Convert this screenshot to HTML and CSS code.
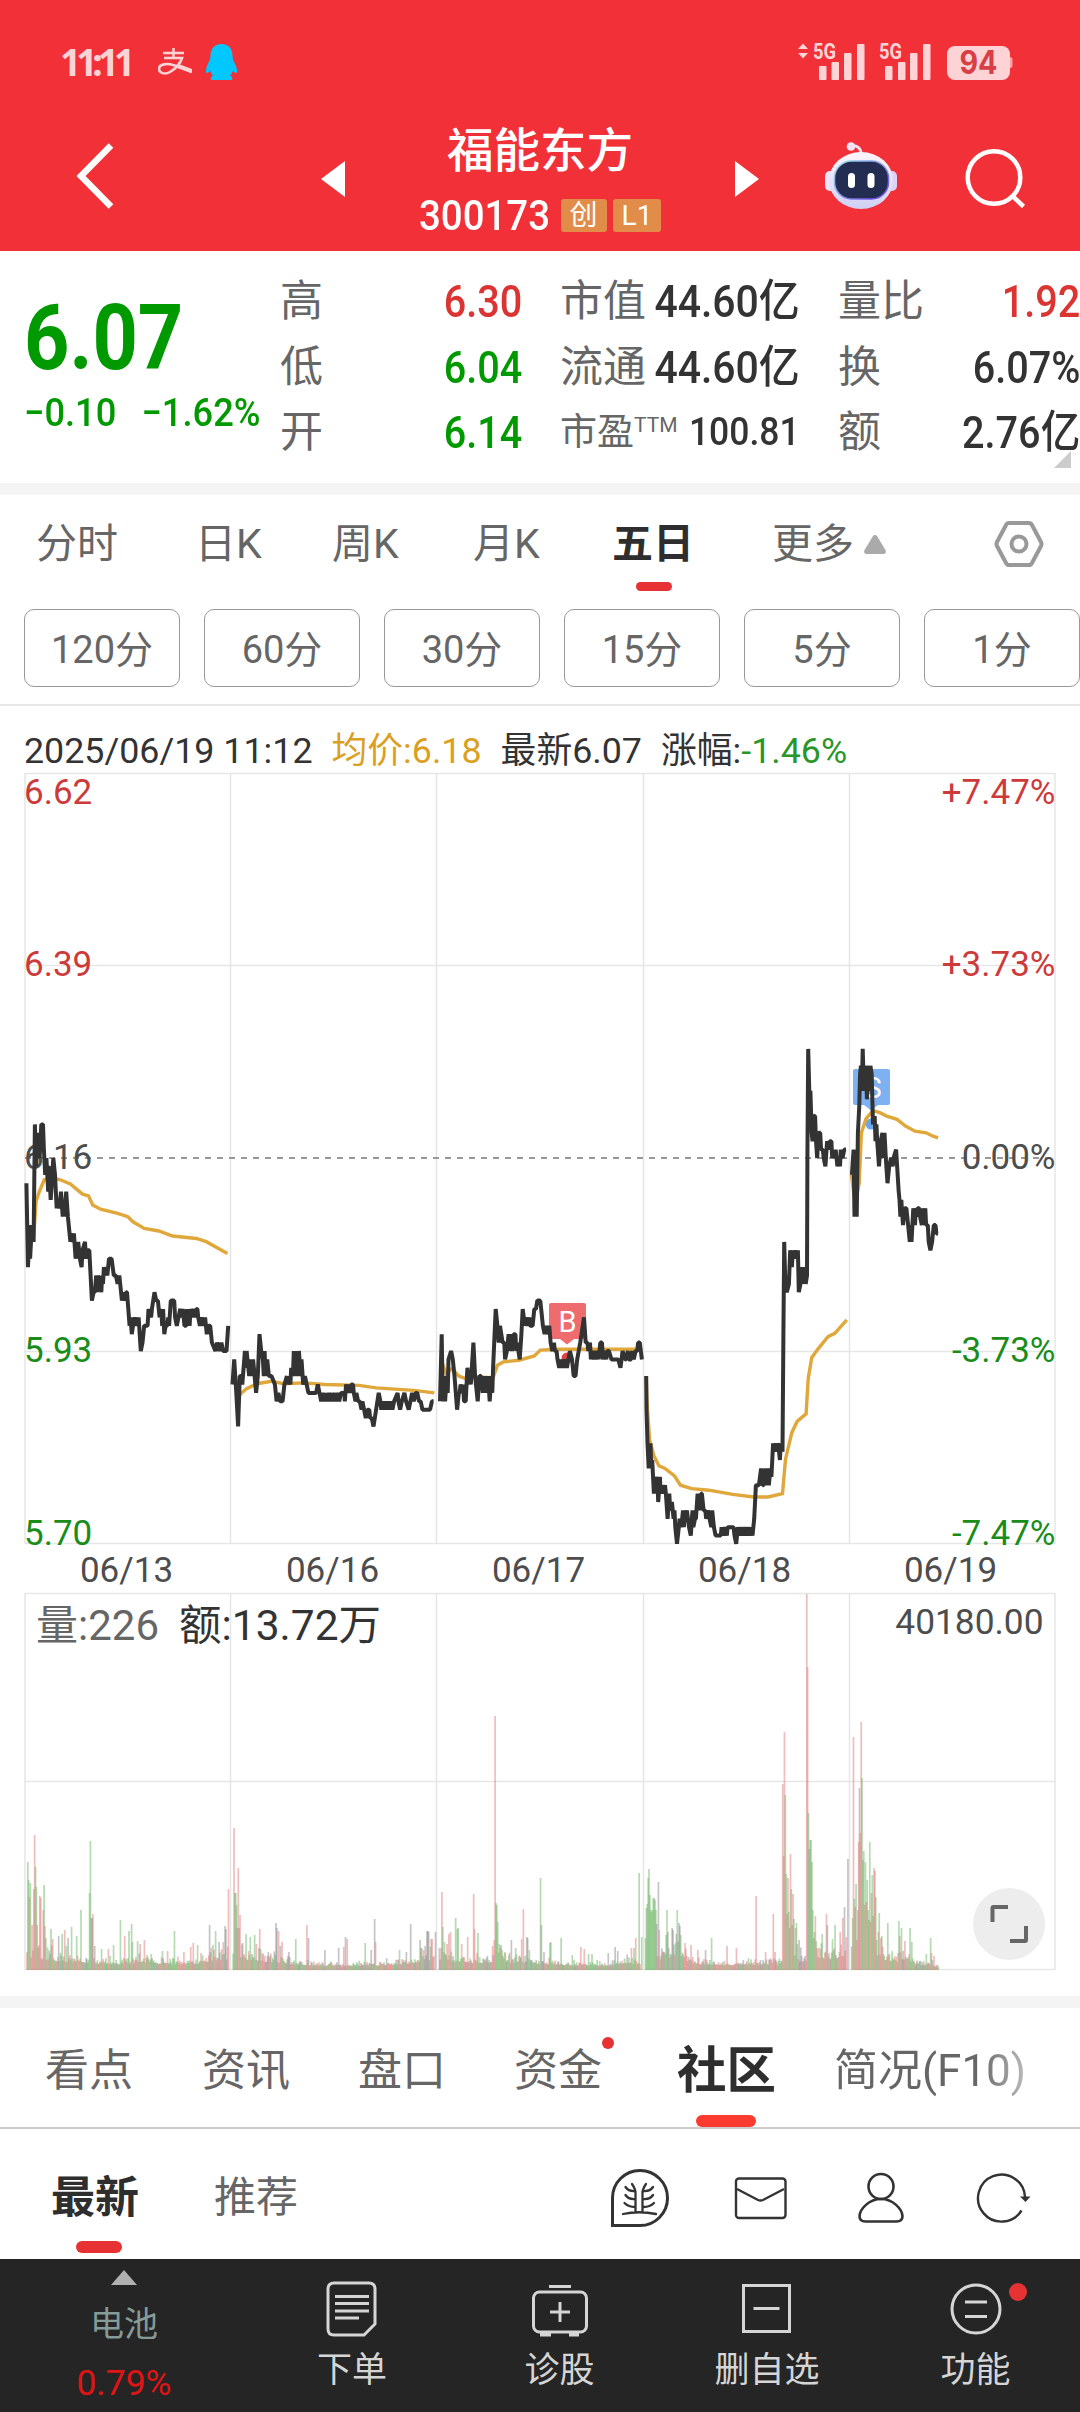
FILE: index.html
```html
<!DOCTYPE html>
<html lang="zh-CN">
<head>
  <meta charset="UTF-8">
  <meta name="viewport" content="width=device-width, initial-scale=1.0">
  <title>福能东方 300173</title>
  <link rel="stylesheet" href="styles.css">
</head>
<body>
  <header class="top">
    <div class="status">
      <span class="time">11:11</span>
      <svg class="alipay" width="34" height="28" viewBox="0 0 34 28" fill="none" stroke="#fdd3d5">
        <path d="M5 5h21M15.500 0v10" stroke-width="2.500"/>
        <path d="M6 10h18c-2 6-7 11-12 14-5 3-11 1-11-3 0-5 8-6 14-4 6 1.500 12 5 19 7" stroke-width="2.600"/>
        <path d="M20 18l14 5" stroke-width="4"/>
      </svg>
      <svg class="qq" width="31" height="36" viewBox="0 0 31 36" fill="#00c8ff">
        <path d="M15.500 0C8 0 4.500 5 4.500 12c0 4-2 6-3.500 10-1.500 4-1.300 7 0 7s2-1 3-2.500c.6 2.300 1.500 3.500 3 5C4 33 4 36 6 36h19c2 0 2-3-1-4.500 1.500-1.500 2.400-2.700 3-5 1 1.500 1.700 2.500 3 2.500s1.500-3 0-7c-1.500-4-3.500-6-3.500-10C26.500 5 23 0 15.500 0z"/>
      </svg>
      <svg class="signals" width="220" height="64" viewBox="796 30 220 64" fill="#fdd3d5">
        <path d="M803 43.500l5 5.500h-10zM803 58.500l5-5.500h-10z"/>
        <text class="net" x="813" y="59" textLength="23" lengthAdjust="spacingAndGlyphs">5G</text>
        <rect x="819" y="66" width="7.500" height="14" rx="1"/>
        <rect x="831.500" y="62" width="7.500" height="18" rx="1"/>
        <rect x="844" y="53" width="7.500" height="27" rx="1"/>
        <rect x="857" y="44" width="7.500" height="36" rx="1"/>
        <text class="net" x="879" y="59" textLength="23" lengthAdjust="spacingAndGlyphs">5G</text>
        <rect x="885" y="66" width="7.500" height="14" rx="1"/>
        <rect x="898" y="62" width="7.500" height="18" rx="1"/>
        <rect x="910" y="53" width="7.500" height="27" rx="1"/>
        <rect x="923" y="44" width="7.500" height="36" rx="1"/>
        <rect x="947" y="46" width="63" height="34" rx="8"/>
        <path d="M1010 57c2 0 2.500 1 2.500 3v5c0 2-.5 3-2.500 3z" opacity=".7"/>
        <text class="battery" x="978.500" y="74" text-anchor="middle" textLength="38" lengthAdjust="spacingAndGlyphs">94</text>
      </svg>
    </div>
    <div class="nav">
      <svg class="back" width="42" height="68" viewBox="0 0 42 68" fill="none" stroke="#fff" stroke-width="6.500">
        <path d="M36 3.500L6 34l30 30.500"/>
      </svg>
      <svg class="arrow" width="24" height="36" viewBox="0 0 24 36" fill="#fff"><path d="M24 0v36L0 18z"/></svg>
      <div class="title">
        <h1>福能东方</h1>
        <div class="code">
          <span class="digits">300173</span><span class="badge">创</span><span class="badge">L1</span>
        </div>
      </div>
      <svg class="arrow" width="24" height="36" viewBox="0 0 24 36" fill="#fff"><path d="M0 0v36l24-18z"/></svg>
      <svg class="robot" width="72" height="67" viewBox="0 0 72 67">
        <defs>
          <linearGradient id="shell" x1="0" y1="0" x2="0" y2="1">
            <stop offset="0" stop-color="#fff5fb"/>
            <stop offset="1" stop-color="#cfd0f4"/>
          </linearGradient>
          <linearGradient id="rim" x1="0" y1="0" x2="1" y2="1">
            <stop offset="0" stop-color="#9be4f0"/>
            <stop offset="1" stop-color="#6a3be0"/>
          </linearGradient>
        </defs>
        <path d="M26 4c6-1 10 2 10 8" fill="none" stroke="#f5dff0" stroke-width="3"/>
        <circle cx="26" cy="4.500" r="4.300" fill="#f4e3f4"/>
        <rect x="0" y="29" width="12" height="20" rx="5" fill="#ece6fa"/>
        <rect x="60" y="29" width="12" height="20" rx="5" fill="#dcd3f6"/>
        <ellipse cx="36" cy="38.500" rx="32" ry="28.500" fill="url(#shell)"/>
        <rect x="9.500" y="19" width="54" height="38" rx="17" fill="#232d52" stroke="url(#rim)" stroke-width="1.500"/>
        <rect x="23" y="31" width="7" height="15" rx="3.500" fill="#fff"/>
        <rect x="42.500" y="31" width="7" height="15" rx="3.500" fill="#fff"/>
      </svg>
      <svg class="search" width="62" height="62" viewBox="0 0 62 62" fill="none" stroke="#fff" stroke-width="4.500">
        <circle cx="29" cy="29.500" r="26.300"/>
        <path d="M47.500 48l11 10.500"/>
      </svg>
    </div>
  </header>

  <section class="quote">
    <div class="price">
      <div class="last">6.07</div>
      <div class="change"><span>−0.10</span><span>−1.62%</span></div>
    </div>
    <dl class="figures">
      <div><dt>高</dt><dd class="up">6.30</dd></div>
      <div><dt>低</dt><dd class="down">6.04</dd></div>
      <div><dt>开</dt><dd class="down">6.14</dd></div>
    </dl>
    <dl class="figures caps">
      <div><dt>市值</dt><dd>44.60亿</dd></div>
      <div><dt>流通</dt><dd>44.60亿</dd></div>
      <div class="pe"><dt>市盈<sup>TTM</sup></dt><dd>100.81</dd></div>
    </dl>
    <dl class="figures">
      <div><dt>量比</dt><dd class="up">1.92</dd></div>
      <div><dt>换</dt><dd>6.07%</dd></div>
      <div><dt>额</dt><dd>2.76亿</dd></div>
    </dl>
    <span class="corner"></span>
  </section>

  <nav class="periods">
    <a>分时</a><a>日K</a><a>周K</a><a>月K</a><a class="active">五日</a>
    <a>更多<svg class="caret" width="24" height="19" viewBox="0 0 24 19" fill="#aaa"><path d="M12 0c1 0 1.500.5 2 1l8.500 14c1 2 0 4-2 4h-17c-2 0-3-2-2-4L10 1c.5-.5 1-1 2-1z"/></svg></a>
    <svg class="gear" width="50" height="48" viewBox="0 0 50 48" fill="none" stroke="#999" stroke-width="4">
      <path d="M15 3h20q2 0 3 2l9 17q1 2 0 4l-9 17q-1 2-3 2H15q-2 0-3-2L3 26q-1-2 0-4l9-17q1-2 3-2z"/>
      <circle cx="25" cy="24" r="7.500"/>
    </svg>
  </nav>

  <div class="minutes">
    <button>120分</button><button>60分</button><button>30分</button><button>15分</button><button>5分</button><button>1分</button>
  </div>

  <section class="chart">
    <div class="legend">
      <span>2025/06/19 11:12</span><span class="avg">均价:6.18</span><span>最新6.07</span><span>涨幅:<b>-1.46%</b></span>
    </div>
    <svg id="priceChart" class="price-chart" width="1080" height="820" viewBox="0 0 1080 820">
      <path class="grid" d="M25 1.500H1055M25 193.500H1055M25 579.500H1055M25 771.500H1055M25 1V772M230.500 1V772M436.500 1V772M643.500 1V772M849.500 1V772M1055 1V772"/>
      <path class="zero" d="M25 386H1055"/>
      <g class="axis">
        <text class="up" x="24" y="32">6.62</text>
        <text class="up" x="24" y="204">6.39</text>
        <text x="24" y="397">6.16</text>
        <text class="down" x="24" y="590">5.93</text>
        <text class="down" x="24" y="773">5.70</text>
      </g>
      <g class="axis end">
        <text class="up" x="1055.500" y="32">+7.47%</text>
        <text class="up" x="1055.500" y="204">+3.73%</text>
        <text x="1055.500" y="397">0.00%</text>
        <text class="down" x="1055.500" y="590">-3.73%</text>
        <text class="down" x="1055.500" y="773">-7.47%</text>
      </g>
      <g class="axis dates">
        <text x="126.500" y="810">06/13</text>
        <text x="332.500" y="810">06/16</text>
        <text x="538.500" y="810">06/17</text>
        <text x="744.500" y="810">06/18</text>
        <text x="950.500" y="810">06/19</text>
      </g>
      <g class="marker">
        <path fill="#ee6c6d" d="M551 531h33q2 0 2 2v32q0 2-2 2h-10l-7 5.500-7-5.500h-9q-2 0-2-2v-32q0-2 2-2z"/>
        <circle fill="#dd4444" cx="567" cy="586" r="5.500"/>
        <text x="567.500" y="560">B</text>
        <path fill="#7db1f1" d="M855 297h33q2 0 2 2v32q0 2-2 2h-10l-7 5.500-7-5.500h-9q-2 0-2-2v-32q0-2 2-2z"/>
        <circle fill="#6ba6ee" cx="871" cy="352" r="5.500"/>
        <text x="873" y="326">S</text>
      </g>
    </svg>
    <div class="volume">
      <svg id="volumeChart" width="1080" height="379" viewBox="0 0 1080 379">
        <path class="grid" d="M25 1.500H1055M25 189.500H1055M25 377.500H1055M25 1V378M230.500 1V378M436.500 1V378M643.500 1V378M849.500 1V378M1055 1V378"/>
        <text class="vol" x="36" y="48">量:226</text>
        <text class="amount" x="179" y="48">额:13.72万</text>
        <text class="max" x="1043.500" y="42">40180.00</text>
      </svg>
      <button class="expand" aria-label="全屏">
        <svg width="40" height="40" viewBox="0 0 40 40" fill="none" stroke="#666" stroke-width="4"><path d="M3.500 18V4q0-1 1-1H19M37 22v14q0 1-1 1H21"/></svg>
      </button>
    </div>
  </section>

  <nav class="sections">
    <a>看点</a><a>资讯</a><a>盘口</a><a class="dot">资金</a><a class="active">社区</a><a class="fade">简况(F10)</a>
  </nav>

  <div class="feed">
    <a class="active">最新</a><a>推荐</a>
    <svg width="60" height="60" viewBox="0 0 60 60" fill="none" stroke="#333" stroke-width="3" stroke-linecap="round">
      <path d="M2.500 57.500V30a27.500 27.500 0 1 1 27.500 27.500z"/>
      <path d="M13 46q16-3.500 33 0M25.500 43V25q0-4-3.500-9M32.500 43V25q0-4 3.500-9M15.500 19q3 4.500 9.500 4M15.500 27q3 4.500 9.500 4M14.500 35q4 4 10.500 4M43 19q-3 4.500-9.500 4M43 27q-3 4.500-9.500 4M44 35q-4 4-10.500 4" stroke-width="2.300"/>
    </svg>
    <svg width="54" height="44" viewBox="0 0 54 44" fill="none" stroke="#333" stroke-width="2.400">
      <rect x="2" y="2.500" width="49.500" height="39.500" rx="3"/><path d="M3 13l21 11q2.500 1 5 0l21-11"/>
    </svg>
    <svg width="48" height="52" viewBox="0 0 48 52" fill="none" stroke="#333" stroke-width="2.600">
      <circle cx="24" cy="14.500" r="12.500"/><path d="M24 27C12 27 3 37 2.500 44q0 5.500 6 5.500h31q6 0 6-5.500C45 37 36 27 24 27z"/>
    </svg>
    <svg width="56" height="52" viewBox="0 0 56 52" fill="none" stroke="#333" stroke-width="2.400">
      <path d="M45.500 38.500A23.500 23.500 0 1 1 49 25"/><path d="M44 24.500h10.500l-5 5.500z" fill="#333" stroke="none"/>
    </svg>
  </div>

  <footer class="bar">
    <a class="sector">
      <svg width="26" height="15" viewBox="0 0 26 15" fill="#b0b0b0"><path d="M13 0l13 15H0z"/></svg>
      <span>电池</span><b>0.79%</b>
    </a>
    <a>
      <svg width="58" height="58" viewBox="0 0 58 58" fill="none" stroke="#d5d5d5" stroke-width="3">
        <path d="M11 3h35q6 0 6 6v35L41 55H11q-6 0-6-6V9q0-6 6-6z"/><path d="M12 16.500h34M12 23.500h34M12 31h34M12 38h24"/>
      </svg>下单
    </a>
    <a>
      <svg width="58" height="58" viewBox="0 0 58 58" fill="none" stroke="#d5d5d5" stroke-width="3">
        <rect x="2.500" y="12" width="53" height="40" rx="6"/><path d="M18 6.500h22M29 22v20M19 32h20"/><path d="M9 54.500h11M38 54.500h10" stroke-width="4"/>
      </svg>诊股
    </a>
    <a>
      <svg width="58" height="58" viewBox="0 0 58 58" fill="none" stroke="#d5d5d5" stroke-width="3">
        <rect x="5.500" y="5.500" width="46" height="46"/><path d="M15.500 28.500h26"/>
      </svg>删自选
    </a>
    <a class="dot">
      <svg width="58" height="58" viewBox="0 0 58 58" fill="none" stroke="#d5d5d5" stroke-width="3">
        <circle cx="29" cy="29" r="24"/><path d="M18 22h22M18 36.500h22"/>
      </svg>功能
    </a>
  </footer>

  <script src="chart.js"></script>
</body>
</html>
```
FILE: styles.css
```css
* {
  box-sizing: border-box;
  margin: 0;
  padding: 0;
}

body {
  width: 1080px;
  height: 2412px;
  overflow: hidden;
  background: #fff;
  color: #333;
  font-family: Roboto, "Noto Sans CJK SC", sans-serif;
}

svg {
  display: block;
  flex: none;
}

button {
  font-family: inherit;
  background: none;
  border: none;
}

/* red header */
.top {
  height: 251px;
  background: #f23038;
  color: #fff;
}

.status {
  display: flex;
  align-items: center;
  height: 124px;
  padding: 0 64px 0 60px;
}

.time {
  width: 98px;
  color: #fdd3d5;
  font: bold 37px/40px "Noto Sans", sans-serif;
  letter-spacing: -5px;
}

.qq {
  margin-left: 14px;
}

.signals {
  margin-left: auto;
}

.net {
  font-size: 22px;
  font-weight: bold;
}

.battery {
  font: bold 32px Inter, sans-serif;
  fill: #d93d45;
}

.nav {
  display: grid;
  grid-template-columns: 321px 24px 390px 24px 66px 72px 68px 1fr;
  height: 127px;
}

.back {
  margin: 18px 0 0 75px;
}

.arrow {
  margin-top: 37px;
}

.title {
  text-align: center;
}

.title h1 {
  font-size: 46.5px;
  font-weight: 500;
  line-height: 54px;
}

.code {
  display: flex;
  justify-content: center;
  align-items: center;
  gap: 6px;
  height: 33px;
  margin-top: 21px;
}

.digits {
  width: 136px;
  font-size: 42px;
  font-weight: 500;
  line-height: 33px;
  text-align: left;
  transform: scaleX(0.915);
  transform-origin: left;
  white-space: nowrap;
}

.badge {
  padding: 0 9px;
  border-radius: 3px;
  background: #e28c4a;
  font-size: 28px;
  line-height: 33px;
}

.robot {
  grid-column: 6;
  margin-top: 18px;
}

.search {
  grid-column: 8;
  margin-top: 24px;
}

/* price summary */
.quote {
  position: relative;
  display: grid;
  grid-template-columns: 280px 242px 278px 280px;
  height: 244px;
  padding-top: 18px;
  border-bottom: 12px solid #f4f4f4;
}

.price {
  padding: 27px 0 0 24px;
  color: #090;
}

.last {
  font-size: 91px;
  font-weight: 700;
  line-height: 84px;
  transform: scaleX(0.87);
  transform-origin: left;
}

.change {
  display: flex;
  gap: 27px;
  margin-top: 13px;
  font-size: 39px;
  font-weight: 500;
  line-height: 40px;
  transform: scaleX(0.93);
  transform-origin: left;
  white-space: nowrap;
}

.figures div {
  display: flex;
  justify-content: space-between;
  height: 65.5px;
  line-height: 65px;
  white-space: nowrap;
}

.figures + .figures {
  padding-left: 38px;
}

.figures dt {
  color: #666;
  font-size: 43px;
}

.figures dd {
  font-size: 45px;
  font-weight: 500;
  transform: scaleX(0.88);
  transform-origin: right;
}

.figures.caps dd {
  margin-left: -20px;
  transform: scaleX(0.91);
}

.figures .pe dt {
  font-size: 37px;
}

.figures .pe dd {
  font-size: 39px;
}

sup {
  font-size: 21px;
  line-height: 0;
  vertical-align: 13px;
}

.up {
  color: #db3533;
  fill: #cc3a3a;
}

.down {
  color: #090;
  fill: #1a8c1a;
}

.corner {
  position: absolute;
  right: 9px;
  top: 200px;
  border-left: 17px solid transparent;
  border-bottom: 17px solid #ccc;
}

/* period tabs */
.periods {
  display: grid;
  grid-template-columns: 159px 137px 141px 139px 160px 221px 50px;
  align-items: center;
  height: 98px;
  padding-left: 36px;
  color: #666;
  font-size: 41px;
}

.periods a {
  display: flex;
  align-items: center;
  line-height: 100px;
  height: 98px;
}

.periods .active {
  position: relative;
  color: #2e2e2e;
  font-weight: 700;
}

.periods .active::after {
  content: "";
  position: absolute;
  left: 24px;
  bottom: 2px;
  width: 36px;
  height: 9px;
  border-radius: 5px;
  background: #e63232;
}

.caret {
  margin-left: 9px;
}

.gear {
  margin-left: 1px;
}

.minutes {
  display: flex;
  gap: 24px;
  height: 113px;
  padding: 16px 0 0 24px;
  border-bottom: 2px solid #e8e8e8;
}

.minutes button {
  width: 156px;
  height: 78px;
  flex: none;
  padding-bottom: 3px;
  border: 1.5px solid #999;
  border-radius: 10px;
  color: #666;
  font-size: 38px;
}

/* charts */
.legend {
  display: flex;
  gap: 19px;
  height: 66px;
  padding-left: 24px;
  font-size: 35.8px;
  line-height: 90px;
  white-space: nowrap;
}

.legend .avg {
  color: #dba022;
}

.legend b {
  color: #2a962a;
  font-weight: normal;
}

.grid {
  fill: none;
  stroke: #e6e6e6;
  stroke-width: 1.5;
}

.zero {
  stroke: #999;
  stroke-width: 2;
  stroke-dasharray: 6 6;
}

.axis {
  font-size: 35px;
  fill: #4d4d4d;
}

.end {
  text-anchor: end;
}

.dates {
  text-anchor: middle;
}

.line {
  fill: none;
  stroke: #333;
  stroke-width: 4;
  stroke-linejoin: miter;
  stroke-miterlimit: 1;
}

.average {
  fill: none;
  stroke: #e0a73a;
  stroke-width: 3.4;
}

.marker text {
  fill: #fff;
  font-size: 29px;
  text-anchor: middle;
}

.volume {
  position: relative;
  height: 404px;
}

.vol,
.amount {
  font-size: 42px;
  fill: #666;
}

.amount {
  font-size: 42.5px;
  fill: #333;
}

.max {
  font-size: 35.3px;
  fill: #4d4d4d;
  text-anchor: end;
}

.r {
  fill: #e07c7c;
}

.g {
  fill: #6db565;
}

.k {
  fill: #8c8c8c;
}

.bars rect {
  opacity: 0.5;
}

.expand {
  position: absolute;
  left: 973px;
  top: 296px;
  display: grid;
  place-items: center;
  width: 72px;
  height: 72px;
  border-radius: 50%;
  background: #ededed;
}

/* content tabs */
.sections {
  display: grid;
  grid-template-columns: 157px 156px 156px 163px 157px 1fr;
  grid-template-rows: 119px;
  height: 133px;
  padding-left: 45px;
  border-top: 12px solid #f4f4f4;
  border-bottom: 2px solid #ccc;
  color: #666;
  font-size: 44px;
  line-height: 127px;
  white-space: nowrap;
}

.sections a,
.feed a,
.bar a {
  position: relative;
  height: 100%;
}

.dot::after {
  content: "";
  position: absolute;
  left: 88px;
  top: 29px;
  width: 12px;
  height: 12px;
  border-radius: 50%;
  background: #e53333;
}

.sections .active {
  color: #2e2e2e;
  font-size: 49.5px;
  font-weight: 700;
}

.sections .active::after,
.feed .active::after {
  content: "";
  position: absolute;
  left: 19px;
  bottom: 0;
  width: 60px;
  height: 12px;
  border-radius: 6px;
  background: #fb3a30;
}

.sections .fade {
  justify-self: start;
  background: linear-gradient(90deg, #666 75%, #bbb);
  background-clip: text;
  -webkit-background-clip: text;
  color: transparent;
}

.feed {
  display: grid;
  grid-template-columns: 163px 396px 124px 123px 119px 56px;
  grid-template-rows: 130px;
  align-items: center;
  height: 130px;
  padding-left: 51px;
  color: #666;
  font-size: 42px;
  line-height: 138px;
}

.feed .active {
  color: #2e2e2e;
  font-size: 44px;
  font-weight: 700;
}

.feed .active::after {
  left: 25px;
  bottom: 6px;
  width: 46px;
  background: #e63232;
}

.feed svg {
  margin-top: 8px;
}

/* bottom bar */
.bar {
  display: grid;
  grid-template-columns: 248px 208px 207px 208px 209px;
  height: 153px;
  background: #252525;
  color: #d5d5d5;
  font-size: 35px;
}

.bar a {
  display: flex;
  flex-direction: column;
  align-items: center;
  padding-top: 21px;
  line-height: 67px;
  height: 153px;
}

.bar a svg {
  margin-bottom: -1px;
}

.bar .sector {
  padding-top: 11px;
  line-height: 80px;
  color: #849b98;
  font-size: 34px;
}

.sector b {
  margin-top: -21px;
  color: #e01414;
  font-size: 35.5px;
  font-weight: normal;
}

.bar .dot::after {
  left: 138px;
  top: 24px;
  width: 18px;
  height: 18px;
}
```
FILE: chart.js
```js
const NS = 'http://www.w3.org/2000/svg';
const LEFT = 25;
const DAY_WIDTH = 206.2;
const MINUTE = 0.8575;

// minute of the day, cents above/below 6.16
const prices = [
  '1.6,-3 3.5,-13 5.5,-8 6,-12 8,-8 10,-10 11.5,4 13,-1 15,3 17,0 19,4 21,4 22,1 23.5,-2 25,0 27,-4 28,-1 30,-5 33,0 35,-2 37,-6 38,-5 40,-6 42,-4 44,-7 45,-5 46,-7 48,-4 50,-7 53,-10 54,-9 56,-10 57,-9 59,-12 62,-10 64,-12 66,-13 67,-11 70,-10 71,-12 73,-11 75,-11 78,-17 80,-16 81.5,-16 83,-14 84,-16 85,-14 87,-15 89,-16 90,-14 91,-15 92,-13 94,-14 95,-13 96,-14 98,-12 99.500,-12 101,-12 103.5,-14 106,-14 108,-15 110,-14 111,-15 113,-17 115,-16 116,-17 118,-16 119,-16 122,-20 123,-19 124.5,-21 126,-20 128,-19 130,-20 132.5,-19 135,-23 137,-22 139,-20 143,-20 144,-18 147,-19 148,-18 151,-16 153,-17 155,-17 157,-19 159,-18 160,-20 161,-18 162.5,-21 164,-20 166,-20 167,-19 168,-20 170,-17 172,-17 174,-17 175,-19 177,-20 179,-19 181,-18 183,-19 184,-18 186,-20 188,-20 189,-18 190,-20 191,-18 192,-20 193,-18 195,-19 197,-18 198,-19 200,-18 201,-18 202,-19 204,-20 206,-19 208,-20 210,-19 212,-21 214,-20 216,-20 218,-22 222,-23 224,-22 227,-23 229,-22 231,-23 235,-23 237,-20',
  '1.5,-27 3.5,-24 6,-28 8,-32 10,-26 12,-26 13,-27 16,-23 17,-25 18,-23 21,-26 23,-24 24.5,-26 25.5,-24 29,-28 31,-26 33,-21 35,-23 37,-24 38,-26 39,-23 40,-26 42,-24 44,-26 47,-26 51,-27 53,-29 55,-28 57,-29 60,-29 62,-27 65,-26 66,-27 67,-26 69,-27 70,-25 72,-26 73,-23 74,-26 75,-23 76,-26 77,-23 78,-26 79,-23 81,-26 82,-24 84,-27 86,-26 88,-27 90,-28 99,-28 101,-27 103,-28 105,-29 107,-28 109,-29 110,-28 112,-29 114,-28 116,-29 117,-28 119,-29 121,-28 122,-29 124,-28 126,-29 128,-28 132,-28 132.5,-29 134,-27 136,-28 137,-27 139,-28 140,-27 142,-27 143,-28 145,-29 146,-28 148,-29 150,-29 152,-30 153,-29 155,-30 157,-31 159,-30 161,-30 162,-31 164,-31 166,-32 169,-30 172,-28 174,-29 175,-30 177,-29 179,-30 180,-29 182,-30 183,-29 185,-30 186,-29 188,-30 190,-29 194,-28 195,-29 197,-30 199,-29 202,-28 204,-29 207,-30 209,-29 211,-28 213,-29 215,-28 217,-28 219,-29 221,-29 223,-30 232,-30 234,-29 236,-29',
  '3,-29 5,-21 6,-27 7,-29 8,-26 9,-29 11,-26 12,-28 13,-24 16,-23 18,-24 20,-26 23,-30 25,-28 26,-28 27,-27 29,-28 30,-27 31,-29 33,-29 35,-25 37,-27 38,-26 39,-27 42,-22 44,-26 47,-29 49,-26 51,-26 53,-28 54,-26 55,-28 57,-26 58,-28 59,-26 61,-29 63,-26 64,-28 65,-25 68,-18 70,-20 71.5,-22 73,-20 76,-22 78,-22 79,-24 81,-23 83,-21 84,-23 85,-21 87,-23 89,-21 91,-21 92,-23 93,-22 96,-24 98,-21 99.5,-18 102,-20 103,-19 105,-20 107,-19 108,-20 111,-20 113,-18 115,-18 116.5,-17 120,-17 123,-20 125,-21 127,-20 128,-21 130.5,-20 132,-22 134,-23 136,-22 137,-23 139,-23 140,-24 142,-25 144,-24 145,-25 147,-24 148,-25 150,-24 151,-25 154.5,-23 157,-24 159,-26 161,-26 163,-24 166.5,-22 168,-21 171,-19 173,-22 175,-22 176,-23 178,-22 179,-24 180,-23 182,-24 183,-23 185,-24 187,-23 188,-24 190,-22 192,-22 193,-24 195,-23 197,-24 198,-23 200,-23 203,-24 211,-24 213.5,-25 216,-23 219,-24 220,-24 222,-23 223,-24 226,-24 227,-23 229,-24 231,-23 233,-23 234,-22 236,-22 238.5,-24',
  '3,-26 3.4,-30 4.5,-34 6,-37 7,-35 8,-34 9,-37 10,-36 12,-40 13,-38 14,-40 16,-38 17,-41 19,-38 20,-40 22,-39 23,-40 25,-39 26,-40 28,-43 30,-40 31,-42 33,-41 35,-43 36,-42 37,-44 39,-46 41,-44 42,-43 44,-44 46,-42 47,-44 48,-42 49,-43 50.5,-42 53,-44 55,-45 57,-42 58,-44 60,-43 61,-43 63,-40 64,-42 65,-40 66,-42 67,-40 68,-40 70,-42 72,-42 73,-43 75,-42 77,-43 79,-44 80,-42 82,-44 84,-45 90,-45 91,-44 93,-45 95,-44 97,-45 98,-44 100,-44 105,-44 106,-45 108,-46 110,-44 112,-45 113,-44 115,-45 116,-44 118,-45 119,-44 121,-45 122,-44 124,-45 125,-44 127,-45 129,-43 131,-39 134.5,-39 137,-37 139,-39 140,-39 142,-37 143,-39 145,-37 146,-39 148,-37 149,-38 151,-34 153,-35 154,-34 156,-35 157,-34 159,-36 160,-34 162,-35 163,-21 164,-10 165,-14 167,-16 169.5,-15 171,-11 173,-13 174,-11 176,-12 177,-11 179,-12 180,-11 181,-16 183,-15 184,-13 185,-15 186,-13 187,-15 188,-13 189,-15 190.500,-14 191,0 192,13 193.5,7 194.5,8 196,3 197,2 198.5,5 200,5 201,2 202.5,0 204,3 206,3 207,1 209,1 210,0 212,-1 214,2 216,1 217,2 219,2 220,0 222,1 223,0 224,1 226,-1 228,0 229,-1 230,1 232,0 234,1 236,1',
  '2.4,-2 4.400,1 5.5,-7 7,-4 8,-7 9.500,3 11,6 12,10 13,11 14,8 15,13 16.5,8 17,11 18,9 19,11 20,7 22,11 23,8 24,11 25.5,10 27,4 29,5 30,2 31,4 32,2 34,-1 36,2 38,3 39,0 40.5,3 42,0 44,-3 46,-1 48,0 50,-1 51,0 54,1 57,-4 58,-5 59,-7 60,-5 62,-8 64,-6 66,-6 68,-8 70,-10 71,-8 72,-10 74,-6 76,-8 77,-6 78,-7 79,-6 81,-6 82,-7 84,-8 85,-6 86,-8 88,-6 89,-8 91,-8 92,-10 94,-11 96,-10 98,-8 100,-8 101,-9 103,-9'
];

const averages = [
  '3,-10 5,-9 10,-9.500 13,-5.2 16,-4.2 22.5,-2.6 31,-2.4 41,-2.6 53,-3.1 67,-4.3 74,-4.5 79,-5.6 88,-6.1 108,-6.6 120,-7 126,-7.6 139,-8.4 156,-8.7 172,-9.3 200,-9.6 212,-10 224,-10.7 236,-11.4',
  '5,-27 8,-28.500 12,-28 18,-27.5 30,-26.9 47,-26.6 61,-26.9 85,-26.8 109,-27 149,-27.1 169,-27.4 213,-27.7 237,-28',
  '4,-28 6,-24.5 10,-25.7 17,-25.1 25,-26 33,-26.3 45,-26.1 65,-26.2 70,-24.7 77,-24.3 95,-24.1 113,-23.6 120,-22.9 140,-22.8 237,-22.8',
  '3,-26 4,-29 7,-33.6 12,-35.5 18,-36.7 25,-37 36,-37.9 43,-39 56,-39.4 76,-39.6 104,-40.1 128.5,-40.4 145,-40.4 162,-40 165.5,-35.9 173,-32.7 179,-31.4 189.5,-30.5 192,-26.3 196,-23.8 203,-22.8 215,-21.3 223,-20.9 237,-19.3',
  '2,-2 5,-4.500 9,-4 11,-3 13.5,3 19,4.7 27,5.65 35,5.4 43,5 55,4.6 65,3.8 76,3.2 89,3 97,2.6 103,2.4'
];

// minute, height, side (r buy, g sell, k flat)
const spikes = [
  '3,108,g 4,90,g 5,73,r 6,87,g 8,45,r 10,81,r 11,135,r 12,103,g 13,83,g 14,45,r 17,74,r 18,72,r 21,60,r 22,85,g 23,44,r 24,32,g 30,41,g 32,31,r 39,34,k 43,36,g 46,40,r 50,32,k 54,43,g 60,34,g 65,60,g 75,77,g 76,129,g 77,52,g 78,52,k 79,56,r 81,24,k 89,21,g 97,21,r 103,25,g 111,50,g 116,34,r 121,39,g 124,46,g 125,28,g 131,29,g 134,26,r 139,30,r 160,19,g 166,19,r 174,39,g 185,18,r 193,23,r 196,27,r 201,25,g 215,45,k 222,39,g 226,28,k 231,28,r 233,44,k 234,41,k 237,81,r',
  '3,142,r 4,77,g 5,77,g 6,65,g 7,42,k 8,102,r 9,42,r 10,55,r 13,27,k 17,36,g 22,33,g 27,35,g 29,26,r 32,22,k 33,41,r 52,47,k 53,42,k 55,39,r 57,24,k 59,28,r 67,18,k 75,31,g 88,45,r 90,32,k 109,20,k 125,22,k 131,23,r 133,33,k 135,31,r 156,27,g 163,20,k 167,51,k 168,28,r 196,20,g 204,18,k 209,46,k 220,30,k 226,24,k 228,39,k 229,39,k 230,38,k 233,31,r 234,31,r 238,38,k',
  '4,22,r 5,78,r 6,43,g 8,28,g 11,26,r 13,36,r 15,38,r 21,52,g 23,41,g 24,42,g 28,26,r 35,33,r 42,76,r 43,41,r 47,37,g 64,24,r 66,30,r 67,254,r 68,67,g 69,65,g 70,48,g 72,26,g 74,25,g 86,30,k 91,22,g 98,31,r 100,61,r 104,33,k 105,32,k 107,20,g 120,92,g 121,45,k 124,18,k 131,27,g 132,28,g 144,32,g 157,15,g 167,23,r 171,21,r 176,16,g 180,16,g 199,17,k 207,23,k 210,19,k 226,22,r 229,22,g 231,32,r 235,97,g 238,33,g',
  '3,62,g 4,66,g 5,92,g 6,101,g 7,75,g 8,60,g 9,58,g 10,60,g 11,72,g 12,72,g 13,70,g 14,60,g 15,46,k 17,88,k 18,40,r 26,35,g 27,60,g 28,38,k 33,42,k 34,40,k 38,36,k 39,60,g 41,47,k 42,44,k 43,35,g 48,27,r 55,25,r 63,20,r 72,20,k 79,32,g 97,24,r 108,22,r 131,74,r 142,18,r 151,56,r 153,18,r 162,186,r 163,114,r 164,238,r 165,175,g 166,96,g 167,56,r 168,92,r 169,58,g 171,116,r 172,81,g 173,45,g 174,76,r 175,51,g 177,42,r 178,47,g 181,30,k 190,376,r 191,303,r 192,157,g 193,121,k 194,130,g 195,130,g 196,108,g 197,60,g 198,32,g 199,38,g 200,54,r 208,36,g 213,56,r 214,45,k 220,31,g 223,45,g 229,38,r 232,52,r 234,63,k 238,111,k',
  '3,52,g 4,233,r 5,71,g 6,63,r 7,86,g 8,30,r 9,60,r 10,128,r 11,182,k 12,137,r 13,248,r 14,192,g 15,110,g 16,119,g 17,65,r 18,108,g 19,68,r 20,90,g 21,60,g 22,50,g 23,128,g 24,48,r 25,77,r 26,95,g 27,54,g 28,102,r 29,99,r 30,73,g 31,30,g 33,38,r 34,57,g 36,32,r 37,34,g 44,47,g 57,49,g 58,34,r 60,42,g 64,29,r 70,42,g 72,28,g 89,16,g 94,32,g 95,17,r 98,14,r'
];

// minute, ceiling of the ordinary volume
const levels = [
  [[0, 40], [25, 32], [35, 26], [60, 24], [85, 16], [110, 14], [140, 22], [150, 12], [200, 15], [220, 28], [234, 28]],
  [[0, 34], [28, 28], [60, 15], [90, 10], [110, 7], [140, 7], [170, 9], [200, 14], [236, 28]],
  [[0, 28], [25, 18], [60, 20], [75, 24], [100, 18], [150, 9], [200, 8], [225, 16], [234, 15]],
  [[0, 54], [18, 34], [40, 34], [60, 15], [100, 10], [150, 14], [161, 10], [162, 62], [175, 44], [185, 20], [195, 44], [215, 28], [235, 46]],
  [[0, 60], [30, 40], [45, 26], [65, 22], [80, 9], [95, 11], [103, 3]]
];

const priceChart = document.getElementById('priceChart');
const volumeChart = document.getElementById('volumeChart');

function add(parent, tag, attrs) {
  const el = document.createElementNS(NS, tag);
  for (const key in attrs) el.setAttribute(key, attrs[key]);
  parent.appendChild(el);
  return el;
}

function toPoints(text, day) {
  return text.split(' ').map(pair => {
    const [minute, cents] = pair.split(',').map(Number);
    const x = LEFT + day * DAY_WIDTH + minute * MINUTE;
    const y = 386 - cents * 8.39;
    return x.toFixed(1) + ',' + y.toFixed(1);
  }).join(' ');
}

averages.forEach((text, day) => {
  add(priceChart, 'polyline', { class: 'average', points: toPoints(text, day) });
});
prices.forEach((text, day) => {
  add(priceChart, 'polyline', { class: 'line', points: toPoints(text, day) });
});

// small repeatable generator so the bars do not jump on reload
let seed = 17;
function random() {
  seed = (seed * 16807) % 2147483647;
  return seed / 2147483647;
}

function levelAt(list, minute) {
  for (let i = 1; i < list.length; i++) {
    if (minute <= list[i][0]) {
      const [m0, v0] = list[i - 1];
      const [m1, v1] = list[i];
      return v0 + (v1 - v0) * (minute - m0) / (m1 - m0);
    }
  }
  return list[list.length - 1][1];
}

const bars = add(volumeChart, 'g', { class: 'bars' });
levels.forEach((list, day) => {
  const fixed = {};
  spikes[day].split(' ').forEach(item => {
    const [minute, height, side] = item.split(',');
    fixed[minute] = [Number(height), side];
  });
  const last = day === 4 ? 103 : 236;
  for (let minute = 2; minute <= 238; minute++) {
    let bar = fixed[minute];
    if (!bar) {
      if (minute > last) continue;
      const side = 'rgkrg'[Math.floor(random() * 5)];
      bar = [2 + levelAt(list, minute) * (0.25 + 0.75 * random() * random()), side];
    }
    add(bars, 'rect', {
      class: bar[1],
      x: (LEFT + day * DAY_WIDTH + minute * MINUTE - 0.6).toFixed(2),
      y: (378 - bar[0]).toFixed(1),
      width: 1.7,
      height: bar[0].toFixed(1)
    });
  }
});
```
